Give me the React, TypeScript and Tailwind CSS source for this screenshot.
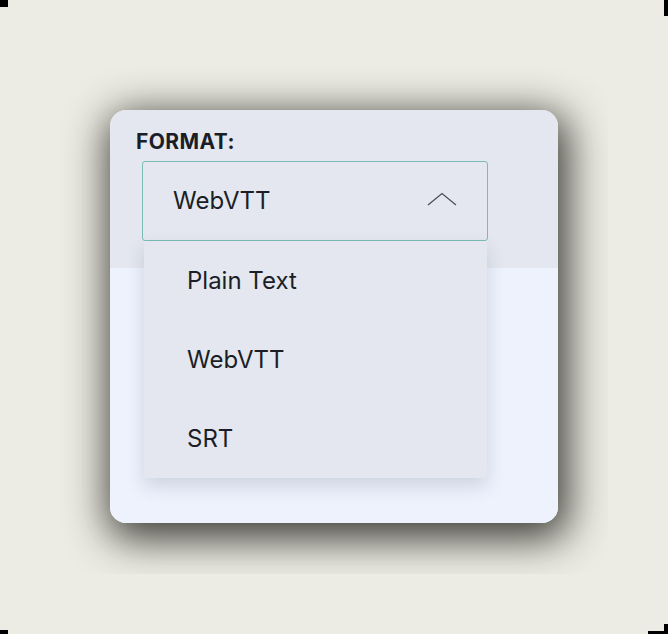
import React from "react";

const options = ["Plain Text", "WebVTT", "SRT"];

const ChevronUp: React.FC = () => (
  <svg width="30" height="14" viewBox="0 0 30 14" fill="none" className="block -mt-[4px]">
    <path d="M1 13 L15 1.5 L29 13" stroke="#4b4f57" strokeWidth="1.3" />
  </svg>
);

const App: React.FC = () => {
  return (
    <div
      className="relative w-[668px] h-[634px] bg-[#ecece4] overflow-hidden"
      style={{ fontFamily: "Inter, 'Noto Sans', sans-serif" }}
    >
      {/* crop marks */}
      <div className="absolute left-0 top-0 w-[8px] h-[7px] bg-black" />
      <div className="absolute right-0 top-0 w-[4px] h-[16px] bg-black" />
      <div className="absolute left-0 bottom-0 w-[8px] h-[4px] bg-black" />
      <div className="absolute right-0 bottom-0 w-[20px] h-[3px] bg-black" />
      <div className="absolute right-0 bottom-0 w-[4px] h-[10px] bg-black" />

      <div className="pt-[60px] pl-[60px]">
        <div className="w-[548px] h-[514px] overflow-hidden p-[50px]">
          {/* Card */}
          <div className="relative w-[448px] h-[413px] rounded-2xl flex flex-col shadow-[4px_10px_40px_6px_rgba(30,30,25,0.85)]">
            {/* Top Section */}
            <div className="h-[158px] bg-[#e4e7ef] rounded-t-2xl pl-[26px] pt-[19px]">
              <div className="text-[21px] leading-[26px] font-bold tracking-[0.02em] text-[#1b1e26]">
                FORMAT:
              </div>
              <div className="mt-[6px] ml-[6px] w-[346px] h-[80px] border border-[#7bbab5] rounded-[3px] flex items-center justify-between pl-[30px] pr-[30px]">
                <span className="text-[24px] text-[#1b1e26]">WebVTT</span>
                <ChevronUp />
              </div>
            </div>

            {/* Lower Section */}
            <div className="flex-1 bg-[#edf2fd] rounded-b-2xl" />

            {/* Dropdown Menu */}
            <div className="absolute left-[34px] top-[131px] w-[343px] bg-[#e4e7ef] rounded-b-[3px] shadow-[0_8px_18px_rgba(60,70,90,0.18)]">
              {options.map((opt) => (
                <div
                  key={opt}
                  className="h-[79px] flex items-center pl-[43px] text-[24px] text-[#1b1e26]"
                >
                  {opt}
                </div>
              ))}
            </div>
          </div>
        </div>
      </div>
    </div>
  );
};

export default App;
